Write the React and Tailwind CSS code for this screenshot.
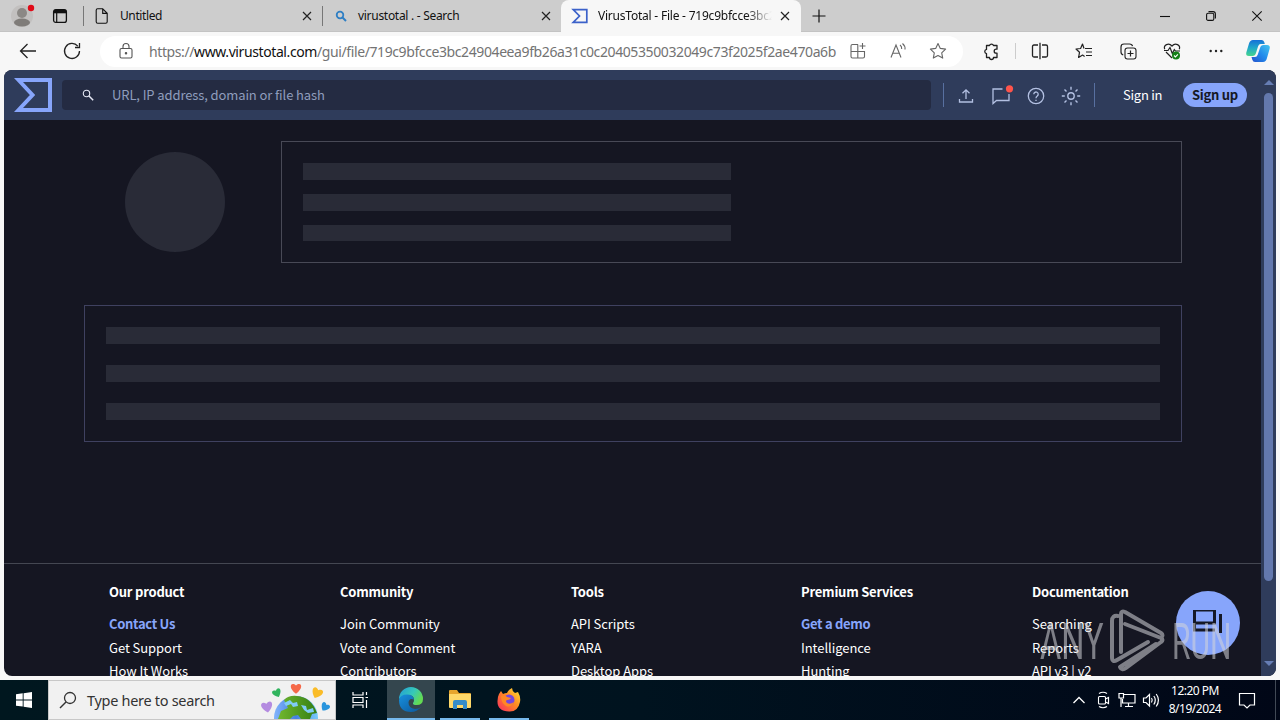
import React from "react";

const UI = "font-['Noto_Sans','Open_Sans',sans-serif]";
const PAGE = "font-['Noto_Sans_CJK_JP','Noto_Sans',sans-serif]";

function Icon({ s = 20, children, className = "" }) {
  return (
    <svg
      width={s}
      height={s}
      viewBox={`0 0 ${s} ${s}`}
      fill="none"
      stroke="currentColor"
      strokeWidth="1.1"
      className={"shrink-0 overflow-visible " + className}
    >
      {children}
    </svg>
  );
}

const Close = () => (
  <Icon s={10} className="text-[#222]">
    <path d="M1 1l8 8M9 1l-8 8" strokeWidth="1.2" />
  </Icon>
);

function Cell({ className, children }) {
  return <div className={"flex shrink-0 items-center justify-center " + className}>{children}</div>;
}

function TabStrip() {
  return (
    <div className="flex h-8 shrink-0 items-center border-b border-[#c3c3c3] bg-[#cdcdcd] text-[12px] text-[#111]">
      <Cell className="w-11">
        <Icon s={24} className="text-[#777]">
          <circle cx="12" cy="12" r="11" fill="#c2c0bf" stroke="none" />
          <circle cx="12" cy="9" r="5" fill="#8b8885" stroke="none" />
          <ellipse cx="12" cy="18.5" rx="8" ry="4" fill="#7f7c79" stroke="none" />
          <circle cx="21" cy="4" r="3.2" fill="#e00b18" stroke="none" />
        </Icon>
      </Cell>
      <Cell className="w-8">
        <Icon s={16}>
          <rect x="1.6" y="1.6" width="12.8" height="12.8" rx="2.2" strokeWidth="1.3" />
          <path d="M2 3.6h12" strokeWidth="3.4" />
          <path d="M4.7 5v9" strokeWidth="1.2" />
        </Icon>
      </Cell>
      <div className="ml-[7px] h-5 w-px bg-[#777]" />
      <Cell className="ml-[10px] w-4">
        <Icon s={16}>
          <path d="M3.500 .8h5.200l4.500 4.500v8.400q0 1.500-1.500 1.500h-8q-1.500 0-1.500-1.500V2.300Q2.200 .8 3.500 .8zM8.700 .8v4.600h4.500" />
        </Icon>
      </Cell>
      <div className="ml-[10px] w-[182px] tracking-[-0.4px]">Untitled</div>
      <Close />
      <div className="ml-[10px] h-5 w-px bg-[#777]" />
      <Cell className="ml-[12px] w-3 text-[#2f7fc4]">
        <Icon s={12}>
          <circle cx="5" cy="5" r="3.300" strokeWidth="1.800" />
          <path d="M7.500 7.500l3.500 3.500" strokeWidth="2" />
        </Icon>
      </Cell>
      <div className="ml-[11px] w-[183px] whitespace-nowrap tracking-[-0.29px]">virustotal . - Search</div>
      <Close />
      <div className="ml-[10px] flex h-8 w-[240px] items-center rounded-t-lg bg-[#f7f7f7]">
        <Cell className="ml-[11px] w-4 text-[#3b61c9]">
          <Icon s={16}>
            <path d="M1.200 1.600h13.600v12.800H1.200L7.500 8z" strokeWidth="1.700" />
          </Icon>
        </Cell>
        <div className="ml-[10px] w-[174px] overflow-hidden whitespace-nowrap tracking-[-0.22px] [mask-image:linear-gradient(to_right,black_85%,transparent)]">
          VirusTotal - File - 719c9bfcce3bc24904
        </div>
        <div className="ml-[8px]"><Close /></div>
      </div>
      <Cell className="ml-[10px] w-4">
        <Icon s={14}><path d="M7 .5v13M.5 7h13" strokeWidth="1.200" /></Icon>
      </Cell>
      <Cell className="ml-auto w-[46px]">
        <Icon s={10}><path d="M0 5.500h10" /></Icon>
      </Cell>
      <Cell className="w-[46px]">
        <Icon s={10}>
          <rect x=".6" y="2.200" width="7.200" height="7.200" rx="1.500" />
          <path d="M2.500 .6h4.500q2.400 0 2.400 2.400v4.500" />
        </Icon>
      </Cell>
      <Cell className="w-[46px]">
        <Icon s={10}><path d="M.3 .3l9.400 9.400M9.700 .3L.3 9.700" /></Icon>
      </Cell>
    </div>
  );
}

function Toolbar() {
  return (
    <div className="flex h-[38px] shrink-0 items-center bg-[#f7f7f7] text-[#222]">
      <Cell className="ml-[6px] w-11">
        <Icon s={18}><path d="M17 9H1.500M8.500 2L1.500 9l7 7" strokeWidth="1.300" /></Icon>
      </Cell>
      <Cell className="w-11">
        <Icon s={18}><path d="M14.800 4.200A7.500 7.500 0 1 0 16.500 9M16.500 1v4.500H12" strokeWidth="1.300" /></Icon>
      </Cell>
      <div className="ml-[6px] flex h-[31px] w-[863px] items-center rounded-full bg-white">
        <Cell className="ml-[16px] w-5 text-[#555]">
          <Icon s={18}>
            <rect x="3" y="6.500" width="12" height="9.500" rx="1.500" />
            <path d="M6 6.500V4.500a3 3 0 0 1 6 0v2" />
            <circle cx="9" cy="11.300" r=".7" fill="currentColor" />
          </Icon>
        </Cell>
        <div className="ml-[13px] w-[690px] whitespace-nowrap text-[14px] tracking-[-0.4px] text-[#737373]">
          https://<span className="text-[#111]">www.virustotal.com</span>
          /gui/file/719c9bfcce3bc24904eea9fb26a31c0c20405350032049c73f2025f2ae470a6b
        </div>
        <Cell className="w-[38px] text-[#666]">
          <Icon s={18}>
            <path d="M9 2.500H3.500q-1.500 0-1.500 1.500v10.500Q2 16 3.500 16H14q1.500 0 1.500-1.500V9.500H2M8.800 2.500V16M13.500 1v6M10.500 4h6" />
          </Icon>
        </Cell>
        <Cell className="w-[42px] text-[#666]">
          <Icon s={18}>
            <path d="M2 15.500L7 3l5 12.500M3.800 11.200h6.400M11 3q2 1.500 1.700 4M13.500 1.500q3 2.500 2.500 6" />
          </Icon>
        </Cell>
        <Cell className="w-[38px] text-[#666]">
          <Icon s={18}>
            <path d="M9 1.500l2.300 4.900 5.300.7-3.900 3.700 1 5.300L9 13.500l-4.700 2.600 1-5.300L1.400 7.100l5.300-.7z" strokeLinejoin="round" />
          </Icon>
        </Cell>
      </div>
      <Cell className="ml-[8px] w-10">
        <Icon s={18}>
          <path d="M4.500 3.500h3a2.100 2.100 0 0 1 4 0h3.500v3.700h-.8a2 2 0 0 0 0 4h.8v4.300h-3.500a2 2 0 0 1-4 0h-3v-3.800a2.200 2.200 0 0 1 0-4.300z" strokeLinejoin="round" strokeWidth="1.300" />
        </Icon>
      </Cell>
      <div className="ml-[4px] h-4 w-px bg-[#ccc]" />
      <Cell className="ml-[2px] w-11">
        <Icon s={18}><path d="M7 3H3q-1.500 0-1.500 1.500v9Q1.500 15 3 15h4M11 3h4q1.500 0 1.500 1.500v9Q16.500 15 15 15h-4M9 .8v16.400" strokeWidth="1.300" /></Icon>
      </Cell>
      <Cell className="w-11">
        <Icon s={18}><path d="M10 6.500h7M11 10h6M11 13.500h6M9 6.500L7.500 2 5.600 6.500 1 7l3.500 3.300-.9 5.200 4-2.400 2 1.300" strokeLinejoin="round" strokeWidth="1.200" /></Icon>
      </Cell>
      <Cell className="w-11">
        <Icon s={18}>
          <rect x="6" y="6" width="11" height="11" rx="2.500" />
          <path d="M11.500 8.500v6M8.500 11.500h6M13.500 4.200Q13.200 2 10.500 2H5Q2 2 2 5v5q0 2.300 2.200 2.800" strokeWidth="1.200" />
        </Icon>
      </Cell>
      <Cell className="w-11">
        <Icon s={18}>
          <path d="M1.700 7.200C.2 3.300 5.500 0 9 4c3.500-4 8.800-.7 7.300 3.200M3 10l6 6M1 8.500h4L7 5.500l2.300 6 2-4 1.200 1.500H17" strokeWidth="1.200" />
          <circle cx="13" cy="13.500" r="4" fill="#158018" stroke="none" />
          <path d="M11 13.500l1.400 1.400 2.500-2.600" stroke="white" />
        </Icon>
      </Cell>
      <Cell className="w-11">
        <Icon s={14}>
          <g fill="currentColor" stroke="none">
            <circle cx="1.700" cy="7" r="1.200" /><circle cx="7" cy="7" r="1.200" /><circle cx="12.300" cy="7" r="1.200" />
          </g>
        </Icon>
      </Cell>
      <Cell className="w-10">
        <svg width="26" height="24" viewBox="0 0 26 24">
          <defs>
            <linearGradient id="cpa" x1="0" y1="0" x2="0" y2="1"><stop stopColor="#1570d8" /><stop offset=".5" stopColor="#20a9c9" /><stop offset="1" stopColor="#45d58c" /></linearGradient>
            <linearGradient id="cpb" x1="1" y1="0" x2="0" y2="1"><stop stopColor="#45c5ee" /><stop offset=".5" stopColor="#218bec" /><stop offset="1" stopColor="#2452cc" /></linearGradient>
          </defs>
          <path d="M8 1h8.500q2 0 2.700 2l.6 2h-4q-2 0-2.700 2.300L11 14q-.8 3-3.500 3H4Q.5 17 1.300 13.500L4 4.500Q5 1 8 1z" fill="url(#cpa)" />
          <path d="M18.500 6H22q3.500 0 2.700 3.500L22 19q-1 4-4 4H10q-2 0-2.700-2.300L6.500 18H10q2 0 2.700-2.300L15 9q.8-3 3.500-3z" fill="url(#cpb)" />
        </svg>
      </Cell>
    </div>
  );
}

function SiteHeader() {
  return (
    <div className="flex h-[50px] shrink-0 items-center bg-[#2f3c5b]">
      <svg width="38" height="34" viewBox="0 0 38 34" className="ml-[10px]">
        <path d="M4.500 2H36v30H4.500L18.500 17z" fill="none" stroke="#87a5fb" strokeWidth="4" />
      </svg>
      <div className="ml-[10px] flex h-[30px] w-[869px] items-center rounded bg-[#242b42] text-[13px] text-[#8f9dbd]">
        <Icon s={12} className="ml-[20px] text-[#e5e8f4]">
          <circle cx="4.500" cy="4.500" r="3.200" />
          <path d="M7 7l4.200 4.200" strokeWidth="1.500" />
        </Icon>
        <span className="ml-[18px] tracking-[-0.11px]">URL, IP address, domain or file hash</span>
      </div>
      <div className="ml-[12px] h-6 w-px bg-[#5870a0]" />
      <div className="ml-[4px] flex pt-px text-[#b3c0e2]">
        <Cell className="w-[36px]">
          <Icon s={16}><path d="M8 11V2M4.500 5.300L8 1.800l3.500 3.500M1.500 11v3h13v-3" strokeWidth="1.300" /></Icon>
        </Cell>
        <Cell className="w-[34px]">
          <Icon s={22}>
            <path d="M12.500 4H3v14.500L6.500 15.500H19V9" strokeWidth="1.300" />
            <circle cx="19.500" cy="3.800" r="3.600" fill="#ff544b" stroke="none" />
          </Icon>
        </Cell>
        <Cell className="w-[35px]">
          <Icon s={18}>
            <circle cx="9" cy="9" r="7.700" strokeWidth="1.300" />
            <path d="M6.800 7.200a2.200 2.200 0 1 1 3.500 1.800Q9 10 9 11.300M9 12.700v1.300" strokeWidth="1.300" />
          </Icon>
        </Cell>
        <Cell className="w-[35px]">
          <Icon s={20}>
            <circle cx="10" cy="10" r="3.200" strokeWidth="1.400" />
            <path d="M10 .8v3M10 16.200v3M.8 10h3M16.200 10h3M3.500 3.500l2 2M14.500 14.500l2 2M3.500 16.500l2-2M14.500 5.500l2-2" strokeWidth="1.400" />
          </Icon>
        </Cell>
      </div>
      <div className="ml-[6px] h-6 w-px bg-[#5870a0]" />
      <div className="ml-[28px] w-[60px] whitespace-nowrap text-[13px] tracking-[-0.25px] text-white">Sign in</div>
      <div className="flex h-6 w-16 items-center justify-center rounded-full bg-[#87a5fb] text-[13px] font-bold tracking-[-0.25px] text-[#151826]">Sign up</div>
    </div>
  );
}

function Skeleton() {
  return (
    <div className="flex h-[444px] shrink-0 flex-col border-b border-[#444752] pl-20">
      <div className="mt-[21px] flex">
        <div className="ml-[41px] mt-[11px] size-[100px] rounded-full bg-[#292b37]" />
        <div className="ml-[56px] flex h-[122px] w-[901px] flex-col gap-[14px] border border-[#484956] px-[21px] py-[21px]">
          <div className="h-[17px] w-[428px] bg-[#292b37]" />
          <div className="h-[17px] w-[428px] bg-[#292b37]" />
          <div className="h-4 w-[428px] bg-[#292b37]" />
        </div>
      </div>
      <div className="mt-[42px] flex h-[137px] w-[1098px] flex-col gap-[21px] border border-[#3f4160] p-[21px]">
        <div className="h-[17px] bg-[#292b37]" />
        <div className="h-[17px] bg-[#292b37]" />
        <div className="h-[17px] bg-[#292b37]" />
      </div>
    </div>
  );
}

const columns = [
  ["Our product", "Contact Us", "Get Support", "How It Works"],
  ["Community", "Join Community", "Vote and Comment", "Contributors"],
  ["Tools", "API Scripts", "YARA", "Desktop Apps"],
  ["Premium Services", "Get a demo", "Intelligence", "Hunting"],
  ["Documentation", "Searching", "Reports", "API v3 | v2"],
];
const highlighted = ["Contact Us", "Get a demo"];

function Footer() {
  return (
    <div className="grid grid-cols-[231px_231px_230px_231px_229px] pl-[105px] pt-4 text-[13px] text-white">
      {columns.map(([head, ...links]) => (
        <div key={head} className="whitespace-nowrap leading-[24px]">
          <div className="mb-2 font-bold tracking-[-0.22px]">{head}</div>
          {links.map((l) => (
            <div key={l} className={"last:-mt-px " + (highlighted.includes(l) ? "font-bold tracking-[-0.3px] text-[#87a5fb]" : "tracking-[-0.06px]")}>{l}</div>
          ))}
        </div>
      ))}
    </div>
  );
}

function Watermark() {
  return (
    <div className="absolute left-[1034px] top-[537px] h-[67px] w-[200px] font-['Roboto',sans-serif] text-[50px] leading-none text-[#d5d5da] opacity-55">
      <span className="absolute left-[2px] top-[10px] origin-left scale-x-[0.65]">ANY</span>
      <svg width="58" height="64" viewBox="0 0 58 64" className="absolute left-[71px] top-[2px]" fill="none" stroke="currentColor" strokeWidth="4" strokeLinejoin="round" strokeLinecap="round">
        <path d="M12 43V5q0-3.500 4-2l36 21q3 2 0 5L16 15M9 7Q3 6 3 12v36q0 6 5 3l31-18M52 29q3 2 0 4L17 59q-4 3-6-1l36-23" />
      </svg>
      <span className="absolute left-[134px] top-[10px] origin-left scale-x-[0.6]">RUN</span>
    </div>
  );
}

function Page() {
  return (
    <div className={"relative mx-1 flex h-[606px] shrink-0 overflow-hidden rounded-lg bg-[#151622] " + PAGE}>
      <div className="flex w-[1257px] shrink-0 flex-col">
        <SiteHeader />
        <Skeleton />
        <Footer />
      </div>
      <div className="flex w-[15px] flex-col items-center justify-between bg-[#2f3c5b]">
        <svg width="10" height="6" viewBox="0 0 10 6" className="mt-[10px]"><path d="M5 0l5 5H0z" fill="#667db4" /></svg>
        <div className="mb-auto mt-[7px] h-[488px] w-[9px] rounded-full bg-[#6378ad]" />
        <svg width="10" height="6" viewBox="0 0 10 6" className="mb-[9px]"><path d="M0 0h10L5 5z" fill="#667db4" /></svg>
      </div>
      <div className="absolute left-[1172px] top-[521px] flex size-16 items-center justify-center rounded-full bg-[#87a5fb] text-[#151826]">
        <svg width="32" height="26" viewBox="0 0 32 26" fill="none" stroke="currentColor" strokeWidth="3">
          <rect x="2.500" y="0" width="20" height="13" />
          <path d="M1 20h22M28.500 4v19M2.500 13v8.500" />
        </svg>
      </div>
      <Watermark />
    </div>
  );
}

const HEART = "M0 3.500C-6-1-3-5 0-2 3-5 6-1 0 3.500z";

function Taskbar() {
  return (
    <div className="flex h-10 shrink-0 bg-linear-to-r from-[#00171f] via-[#00131f] via-50% to-[#010717] text-white">
      <Cell className="w-12">
        <svg width="16" height="16" viewBox="0 0 16 16" fill="white"><path d="M0 2.200L6.700 1.300v6.200H0zM7.600 1.200L16 0v7.500H7.600zM0 8.400h6.700v6.200L0 13.700zM7.600 8.400H16V16l-8.400-1.200z" /></svg>
      </Cell>
      <div className="flex w-[288px] items-center border border-[#c8c8c8] bg-[#f1f1f1] text-[#333]">
        <Icon s={18} className="ml-[10px]">
          <circle cx="11" cy="7" r="5.500" strokeWidth="1.300" /><path d="M7 11L1 17" strokeWidth="1.400" />
        </Icon>
        <span className="ml-[10px] whitespace-nowrap pt-px text-[14.500px] tracking-[-0.3px]">Type here to search</span>
        <svg width="70" height="38" viewBox="0 0 70 38" className="ml-auto mr-[5px] shrink-0">
          <defs>
            <linearGradient id="sea"><stop stopColor="#82b4fb" /><stop offset=".5" stopColor="#467fe0" /><stop offset="1" stopColor="#79cbfb" /></linearGradient>
            <linearGradient id="land"><stop stopColor="#71b72f" /><stop offset="1" stopColor="#347e12" /></linearGradient>
          </defs>
          <circle cx="36" cy="37" r="22" fill="url(#sea)" />
          <path d="M24 19q5-5 13-4 14 1 20 17l-5 1-2 5h-9l-3-4-5 1-3 3H18l3-8 7-3-2-4z" fill="url(#land)" />
          <path d="M24 22l6-3 3 3 4-1 1 4-5 1-2-3-5 2zM41 24l5 1 1 4 6-2 1 4-6 1-4-3z" fill="#80cbf7" />
          <path d={HEART} transform="translate(36 7.500) scale(1.500)" fill="#f56848" />
          <path d={HEART} transform="translate(17 12) rotate(-25) scale(1.250)" fill="#31b45e" />
          <path d={HEART} transform="translate(57 12) rotate(25) scale(1.550)" fill="#fabc28" />
          <path d={HEART} transform="translate(7 26) rotate(-10) scale(1.600)" fill="#b48be0" />
          <path d={HEART} transform="translate(65 26) rotate(35) scale(1.250)" fill="#2995dd" />
        </svg>
      </div>
      <Cell className="w-12">
        <Icon s={18}><path d="M2 1v3h10V1M2 17v-3h10v3M2 6.500h10v5H2zM15.500 1v3M15.500 9v8M14.500 6.500h2.500" strokeWidth="1.200" /></Icon>
      </Cell>
      <Cell className="ml-[3px] w-12 border-b-2 border-[#76b9ed] bg-[#34464e] pt-[2px]">
        <svg width="26" height="26" viewBox="0 0 26 26">
          <defs>
            <linearGradient id="ea" x1="0" y1="0" x2="1" y2=".5"><stop stopColor="#229bd8" /><stop offset=".6" stopColor="#36c9b8" /><stop offset="1" stopColor="#63db53" /></linearGradient>
            <linearGradient id="eb" x1="0" y1="0" x2="1" y2="1"><stop stopColor="#1890dd" /><stop offset="1" stopColor="#0c579b" /></linearGradient>
          </defs>
          <path d="M1 12A12 12 0 0 1 25 12q0 6-6.500 6-4 0-3.500-2 1-1 1-3 0-5-6-5-5 0-9 4z" fill="url(#ea)" />
          <path d="M1 13Q2 7.500 9 7.500q6 0 7 5-5-2-5.500 3Q10.500 21 17 22q4 0 6-2-4 5-10 5Q1 25 1 13z" fill="url(#eb)" />
        </svg>
      </Cell>
      <Cell className="ml-[5px] w-10 border-b-2 border-[#76b9ed] pt-[2px]">
        <svg width="22" height="20" viewBox="0 0 22 20">
          <path d="M0 1q0-1 1-1h7l2 3h11q1 0 1 1v5H0z" fill="#e7a52d" />
          <path d="M0 4h22v13q0 1-1 1H1q-1 0-1-1z" fill="#ffd869" />
          <path d="M4 19v-7q0-2 2-2h10q2 0 2 2v7h-4v-4H8v4z" fill="#368cc8" />
        </svg>
      </Cell>
      <Cell className="ml-[9px] w-10 border-b-2 border-[#76b9ed] pt-[2px]">
        <svg width="24" height="24" viewBox="0 0 24 24">
          <defs><linearGradient id="ff" x1="1" y1="0" x2="0" y2="1"><stop stopColor="#ffe63b" /><stop offset=".45" stopColor="#ff8b22" /><stop offset="1" stopColor="#f82863" /></linearGradient></defs>
          <path d="M2 6l2-3 2 3q2-1 4-1 1-3 5-5 0 3 3 5l3-1q3 5 2 10-2 10-11 9.500Q0 23 .5 13 .5 9 2 6z" fill="url(#ff)" />
          <circle cx="12" cy="12" r="5.500" fill="#7547de" />
          <path d="M4 8q4-2 6 1l4 1q-1 2-4 2-2 1 0 3 3 2 7-1-3 6-8 4-5-3-5-10z" fill="#ff8725" />
        </svg>
      </Cell>
      <Cell className="ml-auto w-6"><Icon s={12}><path d="M.5 9L6 3.500 11.500 9" strokeWidth="1.300" /></Icon></Cell>
      <Cell className="w-6">
        <Icon s={18}><rect x="4.500" y="5.500" width="7" height="7.500" rx="1" /><path d="M11.500 8l3-1.500v6l-3-1.500M5 2.500q4-2.500 8 0M5 15.500q4 2.500 8 0" strokeWidth="1.200" /></Icon>
      </Cell>
      <Cell className="w-6">
        <Icon s={18}><path d="M5 3.500h12v8.500H4.500V8M10.500 12v3.500M7 15.500h8M1 2.500h4.500V7H1zM3 7v9" strokeWidth="1.200" /></Icon>
      </Cell>
      <Cell className="w-6">
        <Icon s={18}><path d="M1.500 7v4.500H4L7.500 15V3.500L4 7zM9.500 7q1.500 2 0 4.500M11.800 5q3 4 0 8.500M14.200 3q4.500 6 0 12.500" strokeWidth="1.200" /></Icon>
      </Cell>
      <div className="flex w-16 flex-col items-center justify-center whitespace-nowrap text-[12px] leading-[18px] tracking-[-0.5px]">
        <span>12:20 PM</span>
        <span>8/19/2024</span>
      </div>
      <Cell className="w-10"><Icon s={18}><path d="M1.500 2.500h15v11.500h-4.500L9 17l-3-3H1.500z" strokeWidth="1.200" /></Icon></Cell>
      <div className="ml-2 mr-[4px] w-px bg-[#414955]" />
    </div>
  );
}

export default function App() {
  return (
    <div className={"flex h-[720px] w-[1280px] flex-col overflow-hidden bg-[#f7f7f7] " + UI}>
      <TabStrip />
      <Toolbar />
      <Page />
      <div className="h-1 shrink-0" />
      <Taskbar />
    </div>
  );
}
